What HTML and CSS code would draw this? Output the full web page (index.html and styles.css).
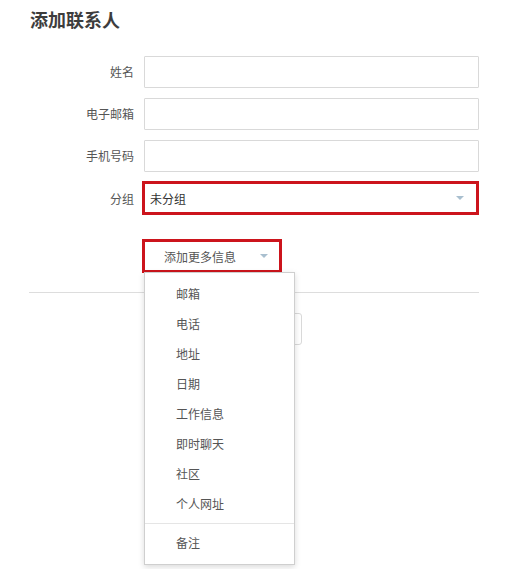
FILE: index.html
```html
<!DOCTYPE html>
<html lang="zh-CN">
<head>
    <meta charset="UTF-8">
    <title>添加联系人</title>
    <link rel="stylesheet" href="styles.css">
</head>
<body>
    <div class="page">
        <h1 class="title">添加联系人</h1>
        <form class="contact-form">
            <div class="form-row">
                <label class="form-label">姓名</label>
                <input class="form-input" type="text">
            </div>
            <div class="form-row">
                <label class="form-label">电子邮箱</label>
                <input class="form-input" type="text">
            </div>
            <div class="form-row">
                <label class="form-label">手机号码</label>
                <input class="form-input" type="text">
            </div>
            <div class="form-row">
                <label class="form-label">分组</label>
                <div class="group-select">
                    <span>未分组</span>
                    <span class="caret"></span>
                </div>
            </div>
            <div class="more-wrap">
                <div class="more-btn">
                    <span>添加更多信息</span>
                    <span class="caret"></span>
                </div>
                <!-- dropdown menu, open -->
                <ul class="more-menu">
                    <li>邮箱</li>
                    <li>电话</li>
                    <li>地址</li>
                    <li>日期</li>
                    <li>工作信息</li>
                    <li>即时聊天</li>
                    <li>社区</li>
                    <li>个人网址</li>
                    <li class="divider"></li>
                    <li>备注</li>
                </ul>
            </div>
            <div class="form-actions">
                <button type="button" class="btn">保存</button>
            </div>
        </form>
    </div>
</body>
</html>
```

FILE: styles.css
```css
html, body {
    height: 100%;
}
body {
    margin: 0;
    background: #fff;
    font-family: "Noto Sans CJK SC", "Noto Sans", sans-serif;
    font-size: 12px;
    color: #555;
}
.page {
    width: 450px;
    min-height: 100%;
    padding: 0 0 0 29px;
}
.title {
    margin: 5px 0 0 1px;
    height: 28px;
    line-height: 28px;
    font-size: 18px;
    font-weight: bold;
    color: #3d3d3d;
}
.contact-form {
    margin-top: 23px;
}
.form-row {
    display: flex;
    align-items: center;
    margin-bottom: 10px;
}
.form-label {
    width: 105px;
    padding-right: 10px;
    text-align: right;
    line-height: 32px;
    color: #555;
}
.form-input {
    width: 335px;
    height: 32px;
    box-sizing: border-box;
    border: 1px solid #d9d9d9;
    border-radius: 1px;
    padding: 0 6px;
    font-size: 12px;
}
.group-select {
    width: 337px;
    height: 34px;
    box-sizing: border-box;
    margin: -1px 0 0 -2px;
    border: 3px solid #cc141c;
    display: flex;
    align-items: center;
    justify-content: space-between;
    padding: 0 12px 0 5px;
    color: #333;
}
.caret {
    width: 0;
    height: 0;
    border-left: 4px solid transparent;
    border-right: 4px solid transparent;
    border-top: 4px solid #a9bfcf;
}
.more-wrap {
    position: relative;
    margin: 24px 0 0 113px;
}
.more-btn {
    width: 140px;
    height: 34px;
    box-sizing: border-box;
    border: 3px solid #cc141c;
    display: flex;
    align-items: center;
    justify-content: space-between;
    padding: 0 11px 0 19px;
    color: #555;
}
.more-menu {
    position: absolute;
    top: 33px;
    left: 2px;
    z-index: 2;
    width: 151px;
    height: 293px;
    box-sizing: border-box;
    margin: 0;
    padding: 6px 0 0;
    list-style: none;
    background: #fff;
    border: 1px solid #cfcfcf;
    box-shadow: 0 2px 6px rgba(0, 0, 0, 0.15);
}
.more-menu li {
    height: 30px;
    line-height: 30px;
    padding-left: 31px;
    color: #555;
}
.more-menu li.divider {
    height: 1px;
    margin: 4px 0;
    padding: 0;
    background: #e5e5e5;
}
.form-actions {
    margin-top: 19px;
    border-top: 1px solid #ddd;
    padding: 20px 0 0 180px;
}
.btn {
    width: 93px;
    height: 32px;
    background: #fff;
    border: 1px solid #d9d9d9;
    border-radius: 3px;
    font-family: inherit;
    font-size: 12px;
    color: #555;
}
```
